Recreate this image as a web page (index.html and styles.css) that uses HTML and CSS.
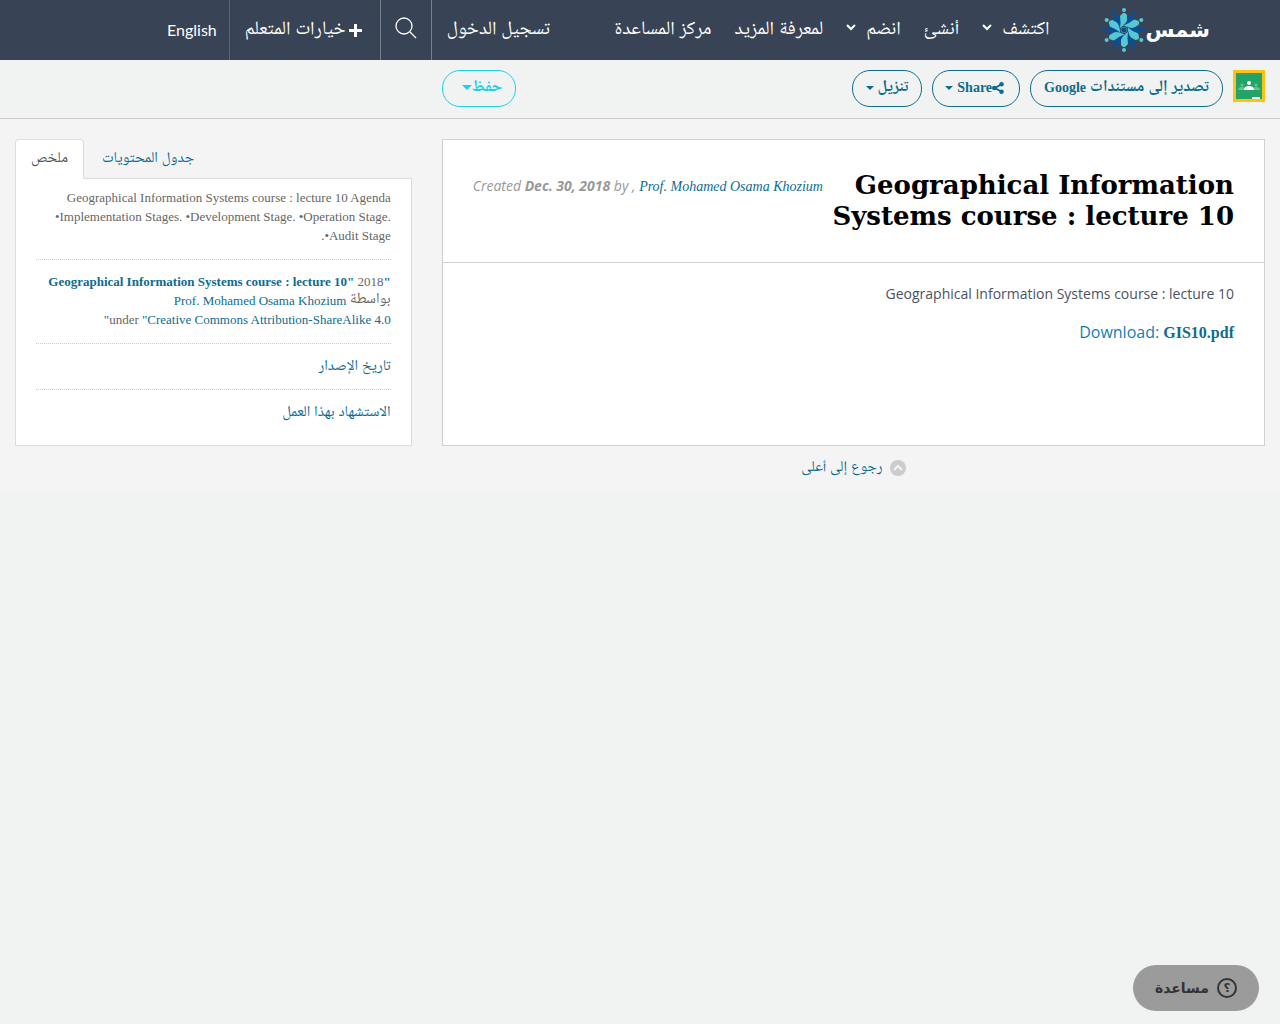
FILE: index.html
```html
<!DOCTYPE html>
<html lang="ar" dir="rtl">
<head>
    <meta charset="UTF-8">
    <meta name="viewport" content="width=device-width, initial-scale=1.0">
    <title>Geographical Information Systems course : lecture 10</title>
    <link rel="stylesheet" href="styles.css">
</head>
<body>
    <header class="navbar">
        <a href="#" class="logo">
            <span class="logo-text">شمس</span>
            <svg class="logo-mark" viewBox="-22 -22 44 44" aria-hidden="true">
                <defs>
                    <g id="ray">
                        <circle cx="0" cy="-20" r="2"/>
                        <path d="M-1 -17 L1 -17 L3 -15 L3 -10 Q2 -6 -4 -2 Q-3 -7 -4 -14 Z"/>
                    </g>
                </defs>
                <g fill="#0b4f92">
                    <use href="#ray" transform="rotate(30)"/>
                    <use href="#ray" transform="rotate(90)"/>
                    <use href="#ray" transform="rotate(150)"/>
                    <use href="#ray" transform="rotate(210)"/>
                    <use href="#ray" transform="rotate(270)"/>
                    <use href="#ray" transform="rotate(330)"/>
                </g>
                <g fill="#56c8d4">
                    <use href="#ray"/>
                    <use href="#ray" transform="rotate(60)"/>
                    <use href="#ray" transform="rotate(120)"/>
                    <use href="#ray" transform="rotate(180)"/>
                    <use href="#ray" transform="rotate(240)"/>
                    <use href="#ray" transform="rotate(300)"/>
                </g>
                <circle r="3" fill="#0b4f92" stroke="#4d7f8c"/>
            </svg>
        </a>

        <nav class="nav-main">
            <a href="#">اكتشف <svg class="chevron" viewBox="0 0 10 14" aria-hidden="true"><path d="M1 2l4 4 4-4"/></svg></a>
            <a href="#">أنشئ</a>
            <a href="#">انضم <svg class="chevron" viewBox="0 0 10 14" aria-hidden="true"><path d="M1 2l4 4 4-4"/></svg></a>
            <a href="#">لمعرفة المزيد</a>
            <a href="#">مركز المساعدة</a>
        </nav>

        <div class="nav-user">
            <a href="#" class="login">تسجيل الدخول</a>
            <button type="button" class="search-btn" aria-label="بحث">
                <svg viewBox="0 0 22 22" aria-hidden="true"><circle cx="9" cy="9" r="8"/><path d="M15 15l6 6"/></svg>
            </button>
            <button type="button" class="options-btn">
                <svg viewBox="0 0 13 13" aria-hidden="true"><path d="M5 0h3v5h5v3H8v5H5V8H0V5h5z"/></svg>
                خيارات المتعلم
            </button>
            <a href="#" class="lang">English</a>
        </div>
    </header>

    <div class="toolbar">
        <div class="toolbar-inner">
            <div class="actions">
                <a href="#" class="classroom" aria-label="Google Classroom">
                    <svg viewBox="0 0 32 32" aria-hidden="true">
                        <path fill="#ffc112" d="M0 0h32v32H0z"/>
                        <path fill="#21a465" d="M3 3h26v26H3z"/>
                        <g fill="#69c196">
                            <circle cx="9" cy="15" r="1.5"/>
                            <circle cx="23" cy="15" r="1.5"/>
                            <path d="M5 20q0-3 4-3t4 3zM19 20q0-3 4-3t4 3z"/>
                        </g>
                        <circle cx="16" cy="13" r="2" fill="#fff"/>
                        <path fill="#fff" d="M11 20q0-4 5-4t5 4zM19 27h8v2h-8z"/>
                    </svg>
                </a>
                <button type="button" class="btn">تصدير إلى مستندات <span class="latin">Google</span></button>
                <button type="button" class="btn btn-share">
                    <svg class="share" viewBox="0 0 12 12" aria-hidden="true"><path d="M10 2L3 6l7 4"/><circle cx="9.5" cy="2.3" r="2.3"/><circle cx="2.3" cy="6" r="2.3"/><circle cx="9.5" cy="9.7" r="2.3"/></svg><span class="latin">Share</span>
                    <span class="caret"></span>
                </button>
                <button type="button" class="btn">تنزيل <span class="caret"></span></button>
            </div>
            <button type="button" class="btn btn-save">حفظ<span class="caret"></span></button>
        </div>
    </div>

    <main class="content">
        <div class="row">
            <article class="col-main">
                <div class="lesson">
                    <div class="lesson-header">
                        <h1>Geographical Information Systems course : lecture 10</h1>
                        <p class="meta" dir="ltr">Created <strong>Dec. 30, 2018</strong> by , <a href="#">Prof. Mohamed Osama Khozium</a></p>
                    </div>
                    <div class="lesson-body">
                        <p>Geographical Information Systems course : lecture 10</p>
                        <p class="download" dir="ltr">Download: <a href="#">GIS10.pdf</a></p>
                    </div>
                </div>
            </article>

            <aside class="col-side">
                <div class="tabs" role="tablist">
                    <button type="button" role="tab" class="tab" aria-selected="false">جدول المحتويات</button>
                    <button type="button" role="tab" class="tab active" aria-selected="true">ملخص</button>
                </div>
                <div class="panel">
                    <p class="summary">Geographical Information Systems course : lecture 10 Agenda •Implementation Stages. •Development Stage. •Operation Stage. •Audit Stage.</p>
                    <p class="license">
                        <a href="#"><strong>"Geographical Information Systems course : lecture 10"</strong></a> 2018<br>
                        <span class="by">بواسطة</span> <a href="#">Prof. Mohamed Osama Khozium</a><br>
                        under <a href="#">"Creative Commons Attribution-ShareAlike 4.0"</a>
                    </p>
                    <p class="side-link"><a href="#">تاريخ الإصدار</a></p>
                    <p class="side-link"><a href="#">الاستشهاد بهذا العمل</a></p>
                </div>
            </aside>
        </div>

        <div class="back-to-top">
            <a href="#">
                <svg viewBox="0 0 16 16" aria-hidden="true"><circle cx="8" cy="8" r="8"/><path d="M4 10l4-4 4 4"/></svg>
                رجوع إلى أعلى
            </a>
        </div>
    </main>

    <button type="button" class="help">
        <span class="help-icon">؟</span>
        مساعدة
    </button>
</body>
</html>
```
FILE: styles.css
```css
* {
    box-sizing: border-box;
}
body {
    margin: 0;
    background-color: #f0f3f2;
    font-family: "Liberation Serif", "Noto Naskh Arabic UI", "Noto Naskh Arabic", serif;
    font-size: 14px;
    line-height: 20px;
    color: #666;
}
a {
    color: #0e6c8f;
    text-decoration: none;
}
button {
    font: inherit;
    cursor: pointer;
}
p {
    margin: 0;
}

/* Navbar */
.navbar {
    display: flex;
    height: 60px;
    padding-right: 70px;
    padding-left: 155px;
    background-color: #384455;
    color: #fff;
    font-family: Lato, "Noto Naskh Arabic UI", "Noto Naskh Arabic", sans-serif;
    font-size: 19px;
}
.navbar a,
.navbar button {
    color: #fff;
}
.logo {
    display: flex;
    align-items: center;
}
.logo-text {
    font-family: "DejaVu Sans", sans-serif;
    font-size: 21px;
    font-weight: bold;
    line-height: 40px;
}
.logo-mark {
    width: 44px;
    height: 44px;
}
.nav-main {
    display: flex;
    align-items: center;
    gap: 23px;
    margin-right: 52px;
}
.nav-main a {
    display: flex;
    align-items: center;
    gap: 10px;
    white-space: nowrap;
}
.chevron {
    width: 10px;
    height: 14px;
    fill: none;
    stroke: #fff;
    stroke-width: 2;
}
.nav-user {
    display: flex;
    margin-right: auto;
}
.nav-user > * {
    display: flex;
    align-items: center;
    gap: 3px;
    padding: 0 15px;
    white-space: nowrap;
}
.nav-user button {
    background: none;
    border: 0;
    border-right: 1px solid #76808d;
}
.nav-user .search-btn {
    padding: 0 14px 4px;
}
.search-btn svg {
    width: 22px;
    height: 22px;
    fill: none;
    stroke: #fff;
    stroke-width: 1.3;
}
.options-btn svg {
    width: 13px;
    height: 13px;
    fill: #fff;
}
.nav-user .options-btn {
    padding-right: 18px;
}
.nav-user .lang {
    padding: 0 12px;
    border-right: 1px solid #5b6675;
    font-size: 16px;
}

/* Toolbar */
.toolbar {
    border-bottom: 1px solid #ccc;
}
.toolbar-inner {
    display: flex;
    justify-content: space-between;
    width: 66.6667%;
    padding: 10px 15px 11px;
}
.actions {
    display: flex;
    gap: 10px;
}
.classroom svg {
    display: block;
    width: 32px;
    height: 32px;
}
.btn {
    display: flex;
    align-items: center;
    gap: 4px;
    height: 37px;
    padding: 0 13px 2px;
    background: none;
    border: 1px solid #0e6c8f;
    border-radius: 18px;
    color: #0e6c8f;
    font-size: 16px;
    font-weight: bold;
    white-space: nowrap;
}
.latin {
    font-size: 14px;
}
.btn-share {
    gap: 0;
    padding: 0 15px 2px 12px;
}
.btn-share .caret {
    margin-right: 4px;
}
.share {
    width: 12px;
    height: 12px;
    fill: #0e6c8f;
}
.share path {
    fill: none;
    stroke: #0e6c8f;
    stroke-width: 2;
}
.caret {
    border: 4px solid transparent;
    border-top-color: currentColor;
    border-bottom: 0;
}
.btn-save {
    gap: 0;
    padding: 0 13px 2px 19px;
    border-color: #1fd0e3;
    color: #1fd0e3;
}
.btn-save .caret {
    border-width: 5px 5px 0;
}

/* Content */
.content {
    padding: 20px 0 15px;
    background-color: #f4f4f4;
}
.row {
    display: flex;
}
.col-main {
    display: flex;
    width: 66.6667%;
    padding: 0 15px;
}
.col-side {
    width: 33.3333%;
    padding: 0 15px;
}
.lesson {
    flex: 1;
    background-color: #fff;
    border: 1px solid #d0d0d0;
}
.lesson-header {
    display: flex;
    justify-content: space-between;
    gap: 4px;
    padding: 30px;
    border-bottom: 1px solid #d0d0d0;
}
.lesson-header h1 {
    flex: 1;
    margin: 0;
    color: #000;
    font-family: "DejaVu Serif", serif;
    font-size: 26px;
    line-height: 31px;
}
.meta {
    padding-top: 6px;
    color: #999;
    font-family: "Open Sans", sans-serif;
    font-style: italic;
    white-space: nowrap;
}
.meta a {
    font-family: "Liberation Serif", serif;
}
.lesson-body {
    padding: 21px 30px;
    color: #4c5264;
    font-family: "Open Sans", sans-serif;
}
.download {
    margin-top: 18px;
    color: #127fae;
    font-size: 16px;
    text-align: right;
}
.download a {
    font-family: "Liberation Serif", serif;
    font-weight: bold;
}

/* Tabs */
.tabs {
    display: flex;
    justify-content: flex-end;
    gap: 2px;
}
.tab {
    height: 40px;
    margin-bottom: -1px;
    padding: 0 15px;
    background: none;
    border: 1px solid transparent;
    border-radius: 4px 4px 0 0;
    color: #0e6c8f;
    font-size: 15px;
}
.tab.active {
    background-color: #fff;
    border-color: #ddd;
    border-bottom-color: #fff;
    color: #555;
}
.panel {
    padding: 9px 20px 22px;
    background-color: #fff;
    border: 1px solid #ddd;
    font-size: 13px;
    line-height: 19px;
}
.panel p {
    padding-bottom: 14px;
}
.panel p + p {
    padding-top: 12px;
    border-top: 1px dotted #ccc;
}
.by {
    font-size: 15px;
    line-height: 16px;
}
.panel p.side-link {
    padding-top: 14px;
    padding-bottom: 12px;
    font-size: 15px;
}
.panel p.side-link:last-child {
    padding-bottom: 0;
}

.back-to-top {
    width: 66.6667%;
    padding-top: 12px;
}
.back-to-top a {
    display: flex;
    justify-content: center;
    align-items: center;
    gap: 7px;
    font-size: 15px;
}
.back-to-top svg {
    width: 16px;
    height: 16px;
    fill: #ccc;
}
.back-to-top path {
    fill: none;
    stroke: #f4f4f4;
    stroke-width: 2;
}

/* Help widget */
.help {
    position: fixed;
    right: 21px;
    bottom: 13px;
    display: flex;
    align-items: center;
    gap: 8px;
    height: 46px;
    padding: 0 22px;
    background-color: #9b9b9b;
    border: 0;
    border-radius: 23px;
    color: #333;
    font-family: "DejaVu Sans", sans-serif;
    font-size: 14px;
    font-weight: bold;
}
.help-icon {
    width: 20px;
    height: 20px;
    border: 2px solid #333;
    border-radius: 50%;
    font-size: 12px;
    line-height: 16px;
}
```
